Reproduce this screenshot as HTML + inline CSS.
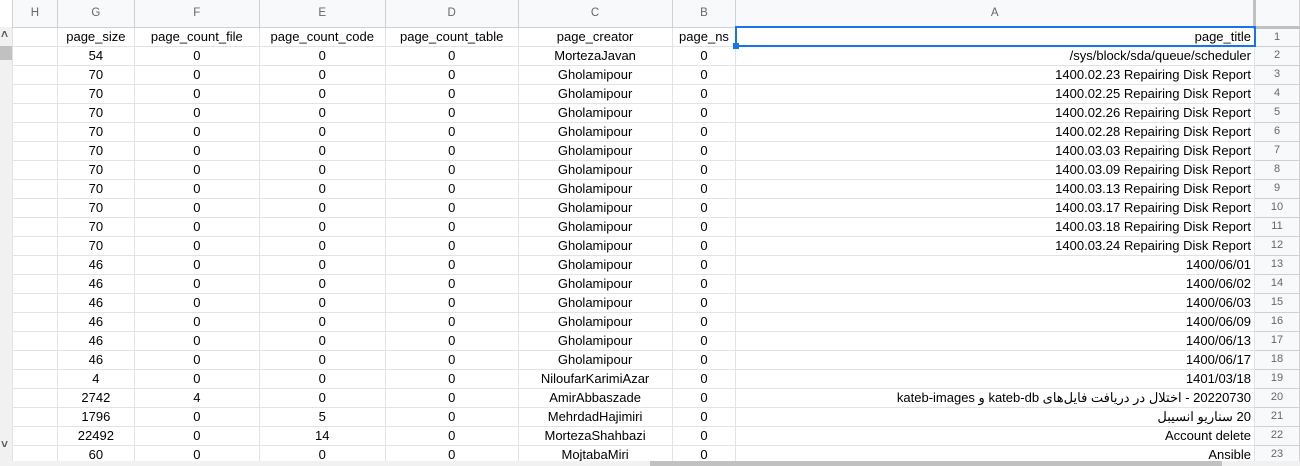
<!DOCTYPE html>
<html><head><meta charset="utf-8"><style>
*{margin:0;padding:0;box-sizing:border-box}
body{width:1300px;height:466px;overflow:hidden;background:#fff;font-family:"Liberation Sans","Noto Sans CJK SC",sans-serif;position:relative}
table{border-collapse:collapse;table-layout:fixed;position:absolute;left:12px;top:0}
td{border:1px solid #e2e3e3;height:19px;font-size:13px;color:#000;text-align:center;white-space:nowrap;overflow:hidden;padding:0 3px;line-height:17px}
tr.h td{height:27px;background:#f8f9fa;color:#666;font-size:11.5px;border-color:#d0d0d0;border-top:none}
td.a{text-align:right}
td.r{background:#f8f9fa;color:#666;font-size:11px;border-color:#d0d0d0}
td.sel{outline:2px solid #1a73e8;outline-offset:-1px}
.vs{position:absolute;left:0;top:27px;width:12px;height:434px;background:#f1f1f1}
.hs{position:absolute;left:0;top:461px;width:1300px;height:5px;background:#f1f1f1}
</style></head><body>
<div class="vs"><div style="position:absolute;top:19px;left:0;width:12px;height:14px;background:#c1c1c1"></div>
<div style="position:absolute;top:0px;left:1px;font-size:12px;color:#555;font-weight:bold">&#708;</div>
<div style="position:absolute;top:410px;left:1px;font-size:12px;color:#555;font-weight:bold">&#709;</div></div>
<table>
<colgroup><col style="width:45px"><col style="width:77px"><col style="width:125px"><col style="width:126px"><col style="width:133px"><col style="width:154px"><col style="width:64px"><col style="width:519px"><col style="width:45px"></colgroup>
<tr class="h"><td>H</td><td>G</td><td>F</td><td>E</td><td>D</td><td>C</td><td>B</td><td>A</td><td style="border-left:3px solid #c0c0c0;border-bottom:3px solid #c0c0c0"></td></tr>
<tr><td></td><td>page_size</td><td>page_count_file</td><td>page_count_code</td><td>page_count_table</td><td>page_creator</td><td>page_ns</td><td class="a sel">page_title</td><td class="r">1</td></tr>
<tr><td></td><td>54</td><td>0</td><td>0</td><td>0</td><td>MortezaJavan</td><td>0</td><td class="a">/sys/block/sda/queue/scheduler</td><td class="r">2</td></tr>
<tr><td></td><td>70</td><td>0</td><td>0</td><td>0</td><td>Gholamipour</td><td>0</td><td class="a">1400.02.23 Repairing Disk Report</td><td class="r">3</td></tr>
<tr><td></td><td>70</td><td>0</td><td>0</td><td>0</td><td>Gholamipour</td><td>0</td><td class="a">1400.02.25 Repairing Disk Report</td><td class="r">4</td></tr>
<tr><td></td><td>70</td><td>0</td><td>0</td><td>0</td><td>Gholamipour</td><td>0</td><td class="a">1400.02.26 Repairing Disk Report</td><td class="r">5</td></tr>
<tr><td></td><td>70</td><td>0</td><td>0</td><td>0</td><td>Gholamipour</td><td>0</td><td class="a">1400.02.28 Repairing Disk Report</td><td class="r">6</td></tr>
<tr><td></td><td>70</td><td>0</td><td>0</td><td>0</td><td>Gholamipour</td><td>0</td><td class="a">1400.03.03 Repairing Disk Report</td><td class="r">7</td></tr>
<tr><td></td><td>70</td><td>0</td><td>0</td><td>0</td><td>Gholamipour</td><td>0</td><td class="a">1400.03.09 Repairing Disk Report</td><td class="r">8</td></tr>
<tr><td></td><td>70</td><td>0</td><td>0</td><td>0</td><td>Gholamipour</td><td>0</td><td class="a">1400.03.13 Repairing Disk Report</td><td class="r">9</td></tr>
<tr><td></td><td>70</td><td>0</td><td>0</td><td>0</td><td>Gholamipour</td><td>0</td><td class="a">1400.03.17 Repairing Disk Report</td><td class="r">10</td></tr>
<tr><td></td><td>70</td><td>0</td><td>0</td><td>0</td><td>Gholamipour</td><td>0</td><td class="a">1400.03.18 Repairing Disk Report</td><td class="r">11</td></tr>
<tr><td></td><td>70</td><td>0</td><td>0</td><td>0</td><td>Gholamipour</td><td>0</td><td class="a">1400.03.24 Repairing Disk Report</td><td class="r">12</td></tr>
<tr><td></td><td>46</td><td>0</td><td>0</td><td>0</td><td>Gholamipour</td><td>0</td><td class="a">1400/06/01</td><td class="r">13</td></tr>
<tr><td></td><td>46</td><td>0</td><td>0</td><td>0</td><td>Gholamipour</td><td>0</td><td class="a">1400/06/02</td><td class="r">14</td></tr>
<tr><td></td><td>46</td><td>0</td><td>0</td><td>0</td><td>Gholamipour</td><td>0</td><td class="a">1400/06/03</td><td class="r">15</td></tr>
<tr><td></td><td>46</td><td>0</td><td>0</td><td>0</td><td>Gholamipour</td><td>0</td><td class="a">1400/06/09</td><td class="r">16</td></tr>
<tr><td></td><td>46</td><td>0</td><td>0</td><td>0</td><td>Gholamipour</td><td>0</td><td class="a">1400/06/13</td><td class="r">17</td></tr>
<tr><td></td><td>46</td><td>0</td><td>0</td><td>0</td><td>Gholamipour</td><td>0</td><td class="a">1400/06/17</td><td class="r">18</td></tr>
<tr><td></td><td>4</td><td>0</td><td>0</td><td>0</td><td>NiloufarKarimiAzar</td><td>0</td><td class="a">1401/03/18</td><td class="r">19</td></tr>
<tr><td></td><td>2742</td><td>4</td><td>0</td><td>0</td><td>AmirAbbaszade</td><td>0</td><td class="a" dir="rtl">20220730 - اختلال در دریافت فایل‌های kateb-db و kateb-images</td><td class="r">20</td></tr>
<tr><td></td><td>1796</td><td>0</td><td>5</td><td>0</td><td>MehrdadHajimiri</td><td>0</td><td class="a" dir="rtl">20 سناریو انسیبل</td><td class="r">21</td></tr>
<tr><td></td><td>22492</td><td>0</td><td>14</td><td>0</td><td>MortezaShahbazi</td><td>0</td><td class="a">Account delete</td><td class="r">22</td></tr>
<tr><td></td><td>60</td><td>0</td><td>0</td><td>0</td><td>MojtabaMiri</td><td>0</td><td class="a">Ansible</td><td class="r">23</td></tr>
</table>
<div class="hs"><div style="position:absolute;left:650px;top:0;width:572px;height:5px;background:#c1c1c1"></div></div>
<div style="position:absolute;left:733px;top:43px;width:6px;height:6px;background:#1a73e8"></div>
</body></html>
